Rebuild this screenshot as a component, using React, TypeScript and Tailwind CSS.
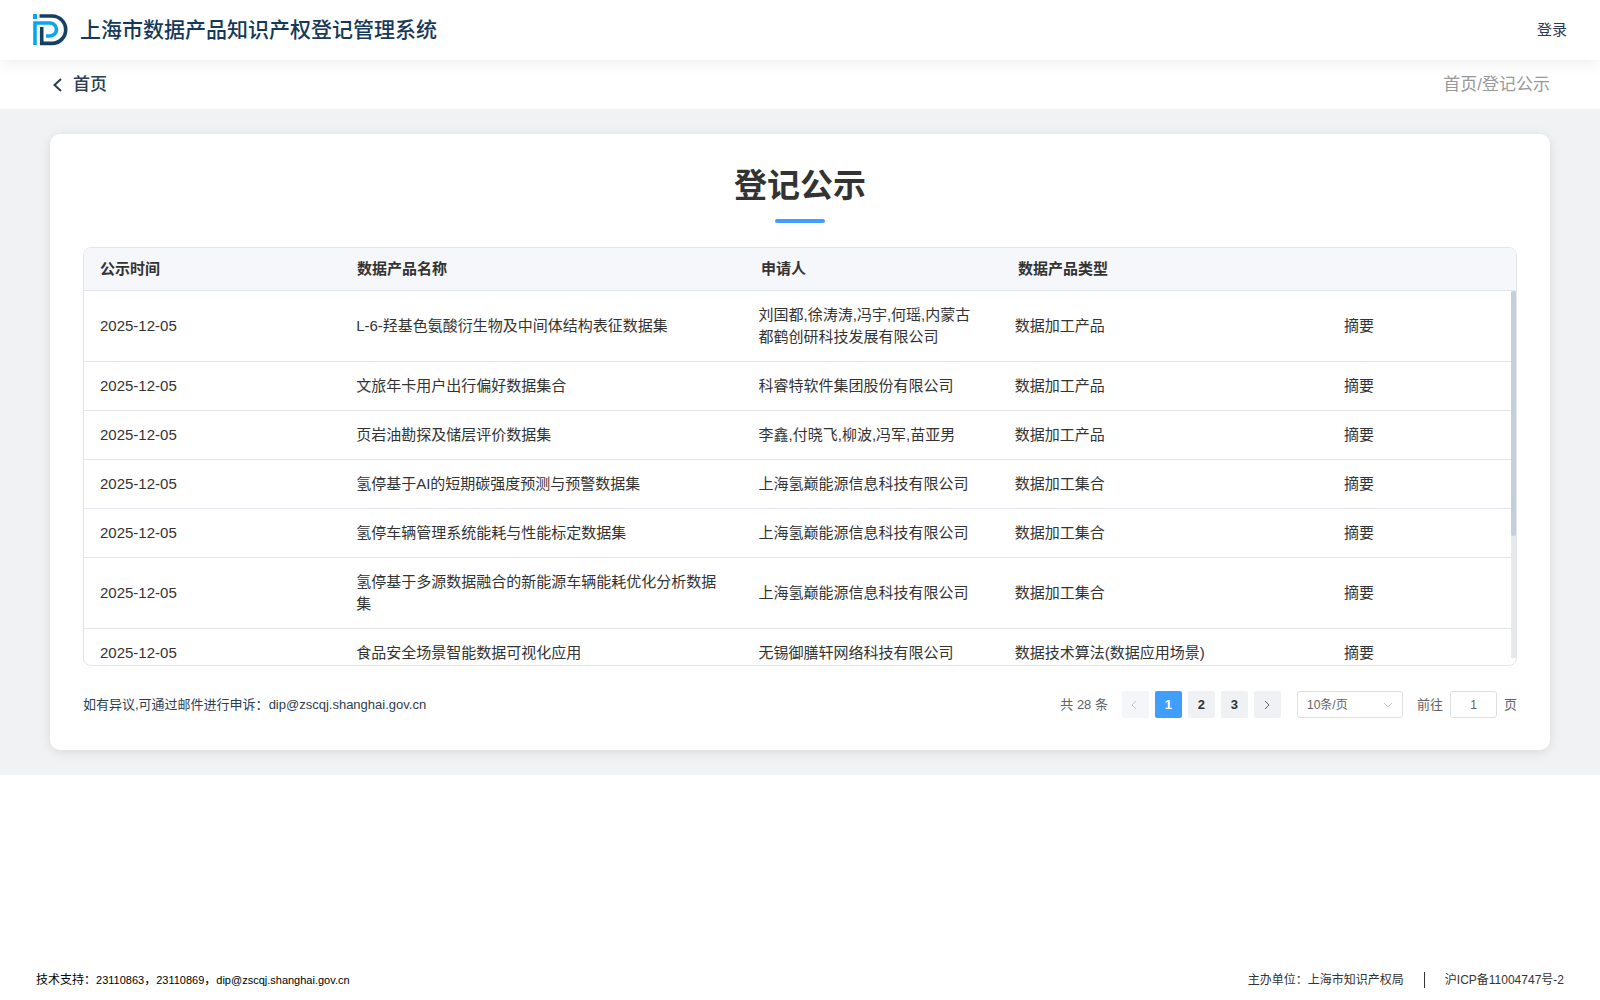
import React, { useState } from 'react';

interface Notice {
  date: string;
  name: string;
  applicant: string;
  type: string;
}

const notices: Notice[] = [
  { date: '2025-12-05', name: 'L-6-羟基色氨酸衍生物及中间体结构表征数据集', applicant: '刘国都,徐涛涛,冯宇,何瑶,内蒙古都鹤创研科技发展有限公司', type: '数据加工产品' },
  { date: '2025-12-05', name: '文旅年卡用户出行偏好数据集合', applicant: '科睿特软件集团股份有限公司', type: '数据加工产品' },
  { date: '2025-12-05', name: '页岩油勘探及储层评价数据集', applicant: '李鑫,付晓飞,柳波,冯军,苗亚男', type: '数据加工产品' },
  { date: '2025-12-05', name: '氢停基于AI的短期碳强度预测与预警数据集', applicant: '上海氢巅能源信息科技有限公司', type: '数据加工集合' },
  { date: '2025-12-05', name: '氢停车辆管理系统能耗与性能标定数据集', applicant: '上海氢巅能源信息科技有限公司', type: '数据加工集合' },
  { date: '2025-12-05', name: '氢停基于多源数据融合的新能源车辆能耗优化分析数据集', applicant: '上海氢巅能源信息科技有限公司', type: '数据加工集合' },
  { date: '2025-12-05', name: '食品安全场景智能数据可视化应用', applicant: '无锡御膳轩网络科技有限公司', type: '数据技术算法(数据应用场景)' },
];

const Logo: React.FC = () => (
  <svg width="35" height="32" viewBox="0 0 35 32" fill="none">
    <path d="M0 0h4v5H0z" fill="#0aa5f0" />
    <path d="M2 31V9h15a6.5 6.5 0 0 1 0 13h-4" stroke="#0aa5f0" strokeWidth="3.6" />
    <path d="M6.500 2H19a13.500 13.500 0 0 1 0 27.400H8.700V13" stroke="#163f63" strokeWidth="3.600" />
  </svg>
);

const Columns: React.FC = () => (
  <colgroup>
    <col className="w-7/39" />
    <col className="w-11/39" />
    <col className="w-7/39" />
    <col className="w-9/39" />
    <col className="w-5/39" />
  </colgroup>
);

const NoticeTable: React.FC = () => (
  <div className="mt-6 overflow-hidden rounded-lg border border-[#e2e5ee] text-[15px] leading-[22px] text-[#333]">
    <table className="w-full table-fixed">
      <Columns />
      <thead>
        <tr className="border-b border-[#e2e5ee] bg-[#f5f7fb] text-left font-bold">
          <th className="px-4 py-[10px]">公示时间</th>
          <th className="px-4 py-[10px]">数据产品名称</th>
          <th className="px-4 py-[10px]">申请人</th>
          <th className="px-4 py-[10px]">数据产品类型</th>
          <td />
        </tr>
      </thead>
    </table>
    <div className="flex max-h-[374px]">
      <div className="min-w-0 flex-1 overflow-y-auto">
        <table className="w-full table-fixed">
          <Columns />
          <tbody>
            {notices.map((item) => (
              <tr key={item.name} className="border-b border-[#e2e5ee]">
                <td className="px-4 py-[13px]">{item.date}</td>
                <td className="px-4 py-[13px]">{item.name}</td>
                <td className="px-4 py-[13px]">{item.applicant}</td>
                <td className="px-4 py-[13px]">{item.type}</td>
                <td className="px-4 py-[13px]">
                  <button type="button">摘要</button>
                </td>
              </tr>
            ))}
          </tbody>
        </table>
      </div>
      <div className="mb-[7px] w-[5px] bg-[#e8e9eb]">
        <div className="h-2/3 rounded-full bg-[#c5cfd9]" />
      </div>
    </div>
  </div>
);

const Pagination: React.FC = () => {
  const [page, setPage] = useState(1);
  const [size, setSize] = useState('10');

  return (
    <div className="flex items-center text-[13px] text-[#606266]">
      <span className="mr-[14px]">共 28 条</span>
      <div className="flex gap-[6px]">
        <button
          type="button"
          aria-label="上一页"
          disabled={page === 1}
          onClick={() => setPage(page - 1)}
          className="flex size-[27px] items-center justify-center rounded-xs bg-[#f5f6fa] text-[#c0c4cc]"
        >
          <Chevron d="M7 2 3 6l4 4" />
        </button>
        {[1, 2, 3].map((n) => (
          <button
            key={n}
            type="button"
            onClick={() => setPage(n)}
            className={`size-[27px] rounded-xs font-bold ${n === page ? 'bg-[#409eff] text-white' : 'bg-[#f0f1f5] text-[#303133]'}`}
          >
            {n}
          </button>
        ))}
        <button
          type="button"
          aria-label="下一页"
          disabled={page === 3}
          onClick={() => setPage(page + 1)}
          className="flex size-[27px] items-center justify-center rounded-xs bg-[#f0f1f5] text-[#606266]"
        >
          <Chevron d="m4 2 4 4-4 4" />
        </button>
      </div>
      <div className="relative ml-4">
        <select
          aria-label="每页条数"
          value={size}
          onChange={(e) => setSize(e.target.value)}
          className="h-[27px] w-[106px] appearance-none rounded-[3px] border border-[#dcdfe6] bg-white pl-[9px] text-xs"
        >
          <option value="10">10条/页</option>
          <option value="20">20条/页</option>
        </select>
        <span className="pointer-events-none absolute top-2 right-[9px] text-[#c0c4cc]">
          <Chevron d="m2 4 4 4 4-4" />
        </span>
      </div>
      <label htmlFor="page-jump" className="ml-[14px]">前往</label>
      <input
        id="page-jump"
        value={page}
        onChange={(e) => setPage(Number(e.target.value) || 1)}
        className="mx-[7px] h-[27px] w-[47px] rounded-[3px] border border-[#dcdfe6] text-center text-xs"
      />
      <span>页</span>
    </div>
  );
};

const Chevron: React.FC<{ d: string }> = ({ d }) => (
  <svg width="12" height="12" viewBox="0 0 12 12" fill="none" stroke="currentColor">
    <path d={d} />
  </svg>
);

const App: React.FC = () => {
  return (
    <div className="flex min-h-screen flex-col bg-white font-['Liberation_Sans','Noto_Sans_CJK_SC',sans-serif] text-[#2c3e50]">
      <header className="relative z-10 flex h-[60px] items-center justify-between bg-white pr-[33px] pl-[33px] shadow-[0_2px_16px_rgba(0,0,0,0.08)]">
        <div className="flex items-center gap-3">
          <Logo />
          <h1 className="text-[21px] font-medium text-[#16395a]">上海市数据产品知识产权登记管理系统</h1>
        </div>
        <a href="#login" className="text-[15px] text-[#2b3a55]">登录</a>
      </header>

      <nav className="flex h-[49px] items-center justify-between px-[50px] text-[17px]">
        <a href="#home" className="flex items-center gap-2 font-medium">
          <svg width="15" height="16" viewBox="0 0 15 16" fill="none" stroke="currentColor" strokeWidth="2">
            <path d="M11 2 4.500 8l6.500 6" />
          </svg>
          首页
        </a>
        <span className="text-[#999]">首页/登记公示</span>
      </nav>

      <main className="bg-[#f1f2f4] px-[50px] py-[25px]">
        <section className="rounded-[10px] bg-white px-[33px] pt-[30px] pb-8 shadow-[0_2px_12px_rgba(0,0,0,0.1)]">
          <h2 className="text-center text-[33px] leading-[44px] font-bold text-[#333]">登记公示</h2>
          <div className="mx-auto mt-[11px] h-1 w-[50px] rounded-xs bg-[#409eff]" />
          <NoticeTable />
          <div className="mt-[25px] flex items-center justify-between">
            <p className="text-[13px]">
              如有异议,可通过邮件进行申诉：<a href="mailto:dip@zscqj.shanghai.gov.cn">dip@zscqj.shanghai.gov.cn</a>
            </p>
            <Pagination />
          </div>
        </section>
      </main>

      <footer className="mt-auto flex items-center justify-between px-9 pb-3 text-xs text-black">
        <p>
          技术支持：<span className="text-[11px]">23110863</span>，<span className="text-[11px]">23110869</span>，
          <a href="mailto:dip@zscqj.shanghai.gov.cn" className="text-[11px]">dip@zscqj.shanghai.gov.cn</a>
        </p>
        <div className="flex items-center gap-5 text-[#333]">
          <span>主办单位：上海市知识产权局</span>
          <span className="h-4 w-px bg-[#333]" />
          <a href="#icp">沪ICP备11004747号-2</a>
        </div>
      </footer>
    </div>
  );
};

export default App;
